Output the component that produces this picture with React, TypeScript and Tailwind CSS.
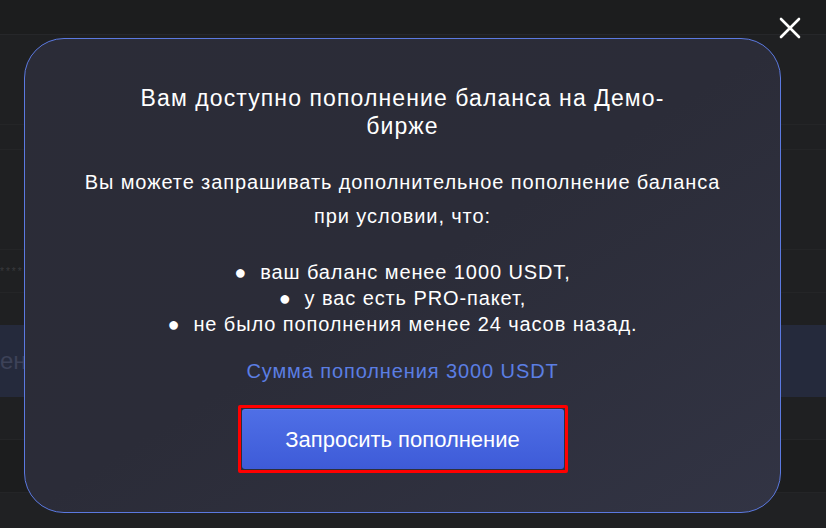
import React from "react";

export default function App() {
  const font = { fontFamily: '"Liberation Sans", Arial, Helvetica, sans-serif' };
  return (
    <div className="relative w-[826px] h-[528px] overflow-hidden bg-[#1f2022]" style={font}>
      {/* background page (dimmed) */}
      <div className="flex flex-col w-full h-full">
        <div className="h-[35px] bg-[#1c1d1e] border-b border-[#26272a]" />
        <div className="h-[90px] border-b border-[#242527]" />
        <div className="h-[25px] border-b border-[#242527]" />
        <div className="h-[100px] border-b border-[#242527]" />
        <div className="h-[43px] flex items-center border-b border-[#242527] text-[#3a3b3e] text-[10px] tracking-[2px]">
          ****
        </div>
        <div className="h-[32px]" />
        <div className="h-[72px] bg-[#252a3c] flex items-center text-[#3d4258] text-[24px] overflow-hidden">
          <span className="whitespace-nowrap">ени</span>
        </div>
        <div className="h-[43px] border-b border-[#242527]" />
        <div className="h-[53px] bg-[#1c1d1e] border-b border-[#242527]" />
        <div className="flex-1 bg-[#202123]" />
      </div>

      {/* close button */}
      <button className="absolute left-[778px] top-[16px] w-[24px] h-[24px] flex items-center justify-center">
        <svg width="22" height="22" viewBox="0 0 22 22" fill="none">
          <path d="M2 2 L20 20 M20 2 L2 20" stroke="#ffffff" strokeWidth="2.6" strokeLinecap="round" />
        </svg>
      </button>

      {/* modal */}
      <div className="absolute left-[24px] top-[38px] w-[757px] h-[475px] rounded-[40px] border border-[#5b79e0] bg-gradient-to-br from-[#2b2c37] via-[#2b2c38] to-[#323444] flex flex-col items-center pt-[45px]">
        <h2 className="w-[570px] text-center text-white text-[23px] leading-[28px] tracking-[1.1px] font-normal">
          Вам доступно пополнение баланса на Демо-бирже
        </h2>
        <p className="mt-[25px] text-center text-white text-[20px] leading-[34px] tracking-[0.9px] whitespace-nowrap">
          Вы можете запрашивать дополнительное пополнение баланса
          <br />
          при условии, что:
        </p>
        <ul className="mt-[26px] text-center text-white text-[20px] leading-[26px] tracking-[0.9px]">
          <li>●&nbsp;&nbsp;ваш баланс менее 1000 USDT,</li>
          <li>●&nbsp;&nbsp;у вас есть PRO-пакет,</li>
          <li>●&nbsp;&nbsp;не было пополнения менее 24 часов назад.</li>
        </ul>
        <p className="mt-[21px] text-center text-[#5b7ee3] text-[20px] leading-[26px] tracking-[0.9px]">
          Сумма пополнения 3000 USDT
        </p>
        <div className="mt-[21px] border-[3px] border-[#ff0000] p-[1px] rounded-[2px]">
          <button className="w-[322px] h-[60px] rounded-[3px] bg-gradient-to-b from-[#4f6fe6] to-[#3e5bd8] text-white text-[22px] shadow-[inset_0_1px_0_rgba(255,255,255,0.08)]">
            Запросить пополнение
          </button>
        </div>
      </div>
    </div>
  );
}
